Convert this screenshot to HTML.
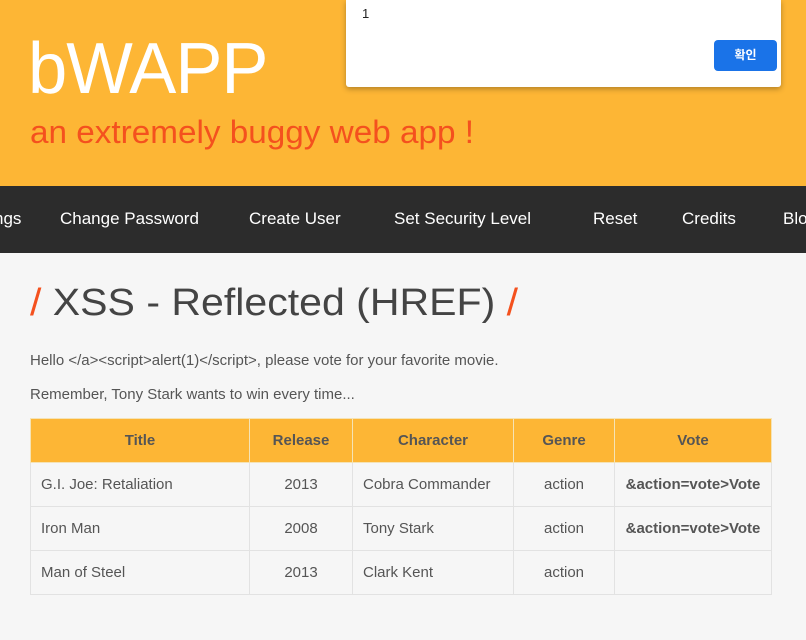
<!DOCTYPE html>
<html><head><meta charset="utf-8"><style>
*{margin:0;padding:0;box-sizing:border-box}
body{width:806px;height:640px;overflow:hidden;background:#f6f6f6;font-family:"Liberation Sans",sans-serif;position:relative}
.hdr{position:absolute;left:0;top:0;width:806px;height:186px;background:#fdb635}
.logo{position:absolute;left:28px;top:28px;font-size:72px;color:#fff;letter-spacing:-1px;font-family:"Liberation Sans",sans-serif;transform:scaleX(0.98);transform-origin:left}
.tag{position:absolute;left:30px;top:114px;font-size:32px;color:#f4511e;white-space:nowrap;transform:scaleX(1.04);transform-origin:left}
.nav{position:absolute;left:0;top:186px;width:806px;height:67px;background:#2c2c2c;color:#fff;font-size:17px;white-space:nowrap}
.nav span{position:absolute;top:23px}
.dlg{position:absolute;left:346px;top:0;width:435px;height:87px;background:#fff;box-shadow:0 2px 6px rgba(0,0,0,.3);border-radius:0 0 3px 3px}
.dlg .one{position:absolute;left:16px;top:6px;font-size:13px;color:#222}
.btn{position:absolute;left:368px;top:40px;width:63px;height:31px;background:#1a73e8;border-radius:4px;color:#fff;font-size:12px;font-weight:bold;text-align:center;line-height:31px;font-family:"Liberation Sans","Noto Sans CJK KR",sans-serif}
h1{position:absolute;left:30px;top:282px;font-size:38px;font-weight:normal;color:#444;white-space:nowrap;transform:scaleX(1.08);transform-origin:left}
h1 b{color:#f4511e;font-weight:normal}
.p{position:absolute;left:30px;font-size:15px;color:#555;white-space:nowrap}
table{position:absolute;left:30px;top:418px;width:742px;border-collapse:collapse;font-size:15px;color:#555}
td,th{border:1px solid #e2e2e2;height:44px;padding:0 10px}
th{background:#fdb635;font-weight:bold;color:#555;border-color:#f5e3b5}
.c{text-align:center}
</style></head><body>
<div class="hdr">
<div class="logo">bWAPP</div>
<div class="tag">an extremely buggy web app !</div>
</div>
<div class="nav">
<span style="left:-6px">ngs</span>
<span style="left:60px">Change Password</span>
<span style="left:249px">Create User</span>
<span style="left:394px">Set Security Level</span>
<span style="left:593px">Reset</span>
<span style="left:682px">Credits</span>
<span style="left:783px">Blog</span>
</div>
<div class="dlg"><div class="one">1</div><div class="btn">확인</div></div>
<h1><b>/</b> XSS - Reflected (HREF) <b>/</b></h1>
<div class="p" style="top:352px">Hello &lt;/a&gt;&lt;script&gt;alert(1)&lt;/script&gt;, please vote for your favorite movie.</div>
<div class="p" style="top:386px">Remember, Tony Stark wants to win every time...</div>
<table>
<tr><th style="width:219px">Title</th><th style="width:103px">Release</th><th style="width:161px">Character</th><th style="width:101px">Genre</th><th>Vote</th></tr>
<tr><td>G.I. Joe: Retaliation</td><td class="c">2013</td><td>Cobra Commander</td><td class="c">action</td><td class="c"><b>&amp;action=vote&gt;Vote</b></td></tr>
<tr><td>Iron Man</td><td class="c">2008</td><td>Tony Stark</td><td class="c">action</td><td class="c"><b>&amp;action=vote&gt;Vote</b></td></tr>
<tr><td>Man of Steel</td><td class="c">2013</td><td>Clark Kent</td><td class="c">action</td><td></td></tr>
</table>
</body></html>
